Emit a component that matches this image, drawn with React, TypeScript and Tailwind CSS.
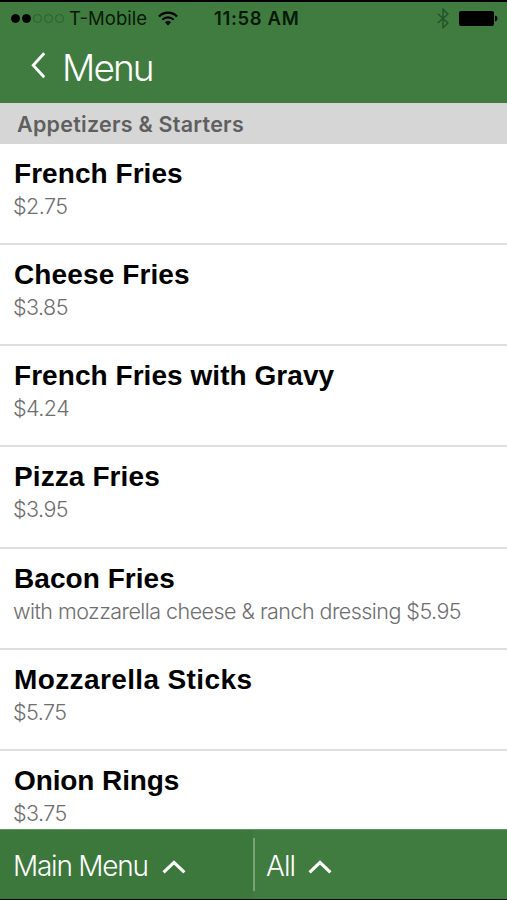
import React from 'react';

interface MenuItem {
  name: string;
  detail: string;
  tracking?: string;
}

const items: MenuItem[] = [
  { name: 'French Fries', detail: '$2.75' },
  { name: 'Cheese Fries', detail: '$3.85', tracking: 'tracking-[0.12px]' },
  { name: 'French Fries with Gravy', detail: '$4.24' },
  { name: 'Pizza Fries', detail: '$3.95', tracking: 'tracking-[0.1px]' },
  { name: 'Bacon Fries', detail: 'with mozzarella cheese & ranch dressing $5.95' },
  { name: 'Mozzarella Sticks', detail: '$5.75', tracking: 'tracking-[0.38px]' },
  { name: 'Onion Rings', detail: '$3.75', tracking: 'tracking-[-0.1px]' },
];

const signal = [true, true, false, false, false];

const StatusBar: React.FC = () => (
  <div className="flex h-8 items-center text-[#061a07]">
    <div className="flex w-[214px] items-center pl-[11px]">
      <div className="flex gap-[2px]">
        {signal.map((filled, i) => (
          <span
            key={i}
            className={`h-[9px] w-[9px] rounded-full border ${
              filled ? 'border-black bg-black' : 'border-[#2b5f2d]'
            }`}
          />
        ))}
      </div>
      <span className="ml-[5px] w-[78px] whitespace-nowrap text-[18.5px] leading-8">T-Mobile</span>
      <svg className="ml-[11px] h-[15px] w-[20px]" viewBox="0 0 20 15" fill="none" stroke="black" strokeWidth="2.1">
        <path d="M1 5.4C6 .3 14 .3 19 5.4" />
        <path d="M4.3 8.8C7.5 5.6 12.5 5.6 15.7 8.8" />
        <path d="M10 14.4 6.9 11.3C8.7 9.7 11.3 9.7 13.1 11.3Z" fill="black" stroke="none" />
      </svg>
    </div>
    <span className="whitespace-nowrap text-[18.5px] font-semibold leading-8 tracking-[0.65px]">11:58 AM</span>
    <svg className="ml-auto mr-[10px] h-[21px] w-[12px]" viewBox="0 0 12 21" fill="none" stroke="#22522a" strokeWidth="1.4">
      <path d="M.8 5.8 11 15 6 19.6V1.2L11 6 .8 15" />
    </svg>
    <svg className="mr-[9px] h-[15px] w-[39px]" viewBox="0 0 39 15">
      <rect width="35" height="15" rx="2" />
      <path d="M36 4.6Q38.6 5 38.6 7.5T36 10.4Z" />
    </svg>
  </div>
);

const ChevronUp: React.FC = () => (
  <svg className="mt-[2px] h-[14px] w-[24px]" viewBox="0 0 24 14" fill="none" stroke="white" strokeWidth="3.2">
    <path d="M1.6 12.4 12 2.4 22.4 12.4" />
  </svg>
);

const App: React.FC = () => {
  return (
    <div className="flex h-[900px] w-[507px] flex-col overflow-hidden border-y-[1px] border-t-2 border-black bg-white font-['Inter',sans-serif]">
      <header className="h-[101px] shrink-0 bg-[#407c40]">
        <StatusBar />
        <div className="flex h-[66px] items-center pl-[31px] text-white">
          <svg className="mt-[-4px] h-[27px] w-[15px]" viewBox="0 0 15 27" fill="none" stroke="white" strokeWidth="2.8">
            <path d="M13.2 1.2 2.2 13.2 13.2 25.2" />
          </svg>
          <h1 className="ml-[16px] mt-[2px] whitespace-nowrap text-[37px] font-light tracking-[-1.9px]">Menu</h1>
        </div>
      </header>

      <h2 className="h-[41px] shrink-0 whitespace-nowrap bg-[#d6d6d6] pl-[17px] text-[21.5px] font-semibold leading-[42px] tracking-[0.25px] text-[#5f5f5f]">
        Appetizers &amp; Starters
      </h2>

      <ul className="min-h-0 flex-1 overflow-hidden">
        {items.map((item) => (
          <li key={item.name} className="h-[101.15px] whitespace-nowrap border-b-2 border-[#dedede] pl-[14px] pt-[13px]">
            <h3
              className={`font-['Liberation_Sans',sans-serif] text-[28px] font-bold leading-[34px] text-black ${
                item.tracking ?? 'tracking-[0.05px]'
              }`}
            >
              {item.name}
            </h3>
            <p className="ml-[-1px] text-[21.5px] font-light leading-[31.2px] tracking-[-0.54px] text-[#6e6e6e]">
              {item.detail}
            </p>
          </li>
        ))}
      </ul>

      <footer className="flex h-[70px] shrink-0 items-center border-t border-[#5f935f] bg-[#407c40] text-[28px] font-light text-white">
        <button className="flex h-full w-[253px] items-center gap-[13px] bg-[#3c783b] pl-[13px] pt-[2px]">
          <span className="w-[136px] whitespace-nowrap text-left tracking-[-1.25px]">Main Menu</span>
          <ChevronUp />
        </button>
        <div className="h-[53px] w-[2px] bg-[#79a279]" />
        <button className="flex items-center gap-[13px] pl-[11px] pt-[2px]">
          <span className="w-[29px] whitespace-nowrap text-left tracking-[-0.9px]">All</span>
          <ChevronUp />
        </button>
      </footer>
    </div>
  );
};

export default App;
